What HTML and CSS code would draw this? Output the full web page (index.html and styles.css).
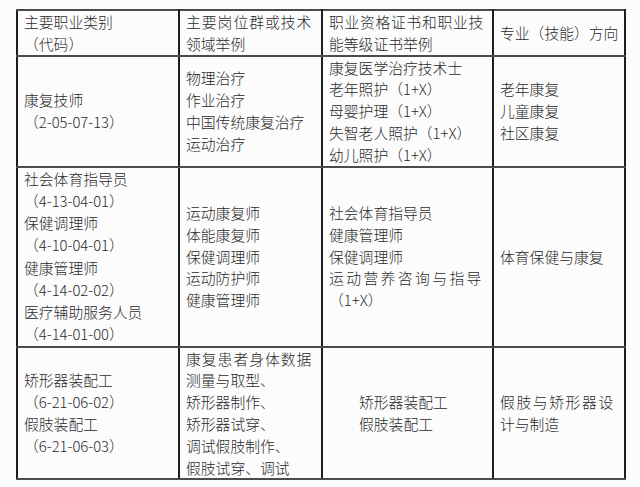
FILE: index.html
```html
<!DOCTYPE html>
<html lang="zh-CN">
<head>
<meta charset="utf-8">
<title>专业方向</title>
<link rel="stylesheet" href="styles.css">
</head>
<body>
<table class="grid">
  <colgroup>
    <col class="c1"><col class="c2"><col class="c3"><col class="c4">
  </colgroup>
  <tr class="r0">
    <td><div>主要职业类别</div><div>（代码）</div></td>
    <td><div class="sp1">主要岗位群或技术</div><div>领域举例</div></td>
    <td><div class="sp07">职业资格证书和职业技</div><div>能等级证书举例</div></td>
    <td><div>专业（技能）方向</div></td>
  </tr>
  <tr class="r1">
    <td><div>康复技师</div><div>（2-05-07-13）</div></td>
    <td><div>物理治疗</div><div>作业治疗</div><div>中国传统康复治疗</div><div>运动治疗</div></td>
    <td><div>康复医学治疗技术士</div><div>老年照护（1+X）</div><div>母婴护理（1+X）</div><div>失智老人照护（1+X）</div><div>幼儿照护（1+X）</div></td>
    <td><div>老年康复</div><div>儿童康复</div><div>社区康复</div></td>
  </tr>
  <tr class="r2">
    <td><div>社会体育指导员</div><div>（4-13-04-01）</div><div>保健调理师</div><div>（4-10-04-01）</div><div>健康管理师</div><div>（4-14-02-02）</div><div>医疗辅助服务人员</div><div>（4-14-01-00）</div></td>
    <td><div>运动康复师</div><div>体能康复师</div><div>保健调理师</div><div>运动防护师</div><div>健康管理师</div></td>
    <td><div>社会体育指导员</div><div>健康管理师</div><div>保健调理师</div><div class="sp2">运动营养咨询与指导</div><div>（1+X）</div></td>
    <td><div>体育保健与康复</div></td>
  </tr>
  <tr class="r3">
    <td><div>矫形器装配工</div><div>（6-21-06-02）</div><div>假肢装配工</div><div>（6-21-06-03）</div></td>
    <td><div class="sp1">康复患者身体数据</div><div>测量与取型、</div><div>矫形器制作、</div><div>矫形器试穿、</div><div>调试假肢制作、</div><div>假肢试穿、调试</div></td>
    <td class="indent"><div>矫形器装配工</div><div>假肢装配工</div></td>
    <td><div class="sp15">假肢与矫形器设</div><div>计与制造</div></td>
  </tr>
</table>
</body>
</html>
```

FILE: styles.css
```css
html, body {
  margin: 0;
  padding: 0;
  background: #fcfcfd;
}
body {
  padding: 9px 0 0 16px;
  font-family: "Noto Sans CJK SC", "Noto Sans", sans-serif;
  font-size: 14.8px;
  font-weight: 300;
  color: #2a2a2a;
}
.grid {
  border-collapse: collapse;
  table-layout: fixed;
  width: 608px;
}
.c1 { width: 162px; }
.c2 { width: 143px; }
.c3 { width: 171px; }
.c4 { width: 132px; }
.grid td {
  border-top: 2px solid #4a4a4a;
  border-bottom: 2px solid #4a4a4a;
  border-left: 2px solid #1e1e1e;
  border-right: 2px solid #1e1e1e;
  padding: 0 4px 0 6px;
  vertical-align: middle;
  line-height: 21.8px;
  white-space: nowrap;
  overflow: hidden;
}
.r0 { height: 45px; }
.r1 { height: 110px; }
.r2 { height: 180px; }
.r3 { height: 132px; }
.r2 td:first-child { line-height: 22.1px; }
.sp07 { letter-spacing: 0.7px; }
.sp1 { letter-spacing: 1px; }
.sp15 { letter-spacing: 1.6px; }
.sp2 { letter-spacing: 2.4px; }
.grid td.indent { padding-left: 36px; }
```
